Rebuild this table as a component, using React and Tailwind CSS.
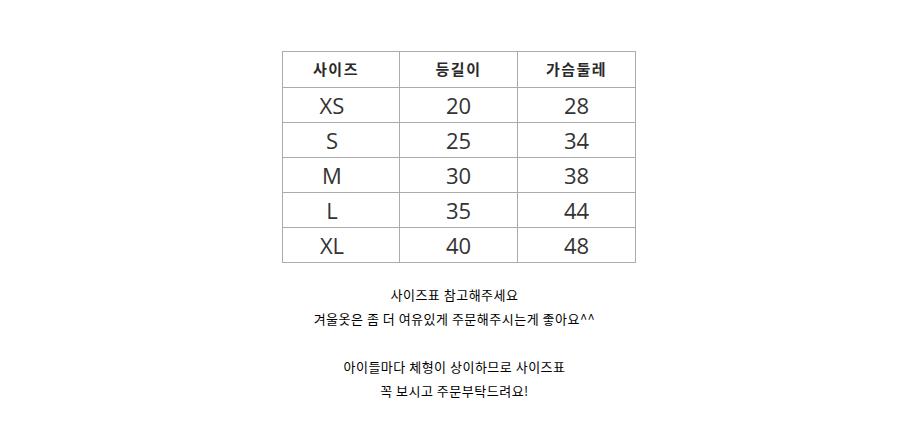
import React from "react"

const rows = [
  ["XS", "20", "28"],
  ["S", "25", "34"],
  ["M", "30", "38"],
  ["L", "35", "44"],
  ["XL", "40", "48"],
]

const lines = [
  "사이즈표 참고해주세요",
  "겨울옷은 좀 더 여유있게 주문해주시는게 좋아요^^",
  "",
  "아이들마다 체형이 상이하므로 사이즈표",
  "꼭 보시고 주문부탁드려요!",
]

export default function App() {
  return (
    <div className="w-full min-h-[432px] bg-white pt-[51px]">
      <div className="flex justify-center">
        <div className="ml-[10px] w-[355px]">
          <table className="border-collapse text-[#333]" style={{ fontFamily: '"Open Sans", "Noto Sans CJK KR", sans-serif' }}>
            <thead>
              <tr className="h-[36px]">
                {["사이즈", "등길이", "가슴둘레"].map((h, i) => (
                  <th
                    key={h}
                    className={`border-[1.5px] border-[#ababab] p-0 text-[15px] font-bold tracking-[1.5px] text-[#2a2a2a] ${i === 0 ? "w-[117px] pr-[10px]" : "w-[118px]"}`}
                    style={{ fontFamily: '"Noto Sans CJK KR", sans-serif' }}
                  >
                    {h}
                  </th>
                ))}
              </tr>
            </thead>
            <tbody>
              {rows.map(r => (
                <tr key={r[0]} className="h-[35px]">
                  {r.map((c, i) => (
                    <td
                      key={i}
                      className={`border-[1.5px] border-[#ababab] p-0 text-center text-[22px] leading-none ${i === 0 ? "pr-[18px]" : ""}`}
                    >
                      {c}
                    </td>
                  ))}
                </tr>
              ))}
            </tbody>
          </table>
        </div>
      </div>
      <div
        className="mt-[20px] flex flex-col items-center text-[13px] leading-[24px] tracking-[0.5px] text-black"
        style={{ fontFamily: '"Noto Sans CJK KR", sans-serif' }}
      >
        {lines.map((l, i) => (
          <p key={i} className="h-[24px]">{l}</p>
        ))}
      </div>
    </div>
  )
}
